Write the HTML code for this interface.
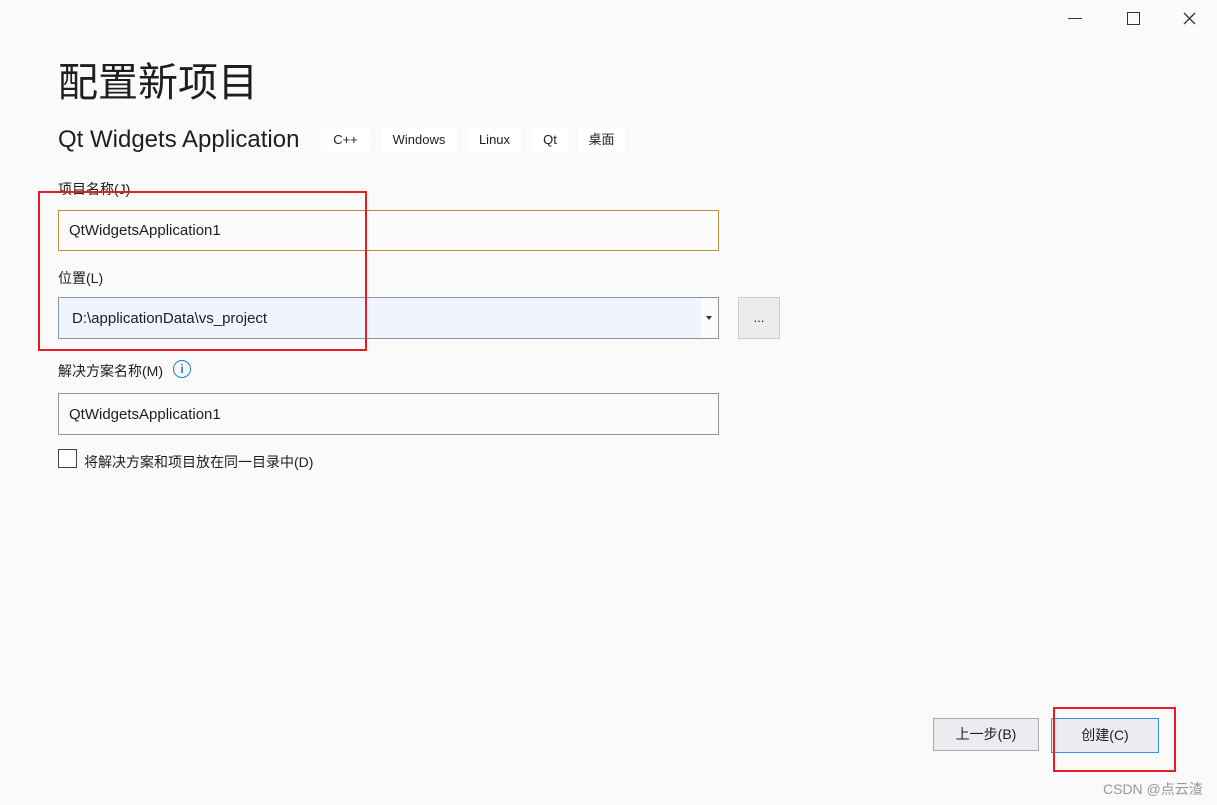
<!DOCTYPE html>
<html><head><meta charset="utf-8"><style>
body{margin:0;width:1217px;height:805px;background:#fafafa;font-family:"Liberation Sans","Noto Sans CJK SC",sans-serif;color:#1e1e1e;position:relative;overflow:hidden}
.a{position:absolute}
.tag{position:absolute;top:127px;height:26px;background:#fff;border-radius:3px;font-size:13px;line-height:26px;text-align:center}
.lbl{position:absolute;font-size:14px;left:58px}
.box{position:absolute;left:58px;width:661px;background:#fbfbfb;font-size:15px;box-sizing:border-box;padding-left:10px}
.red{position:absolute;border:2px solid #e81c24;box-sizing:border-box}
</style></head><body>
<div class="a" style="left:1068px;top:18px;width:14px;border-top:1px solid #333"></div>
<div class="a" style="left:1127px;top:12px;width:11px;height:11px;border:1px solid #333"></div>
<svg class="a" style="left:1183px;top:12px" width="13" height="13"><path d="M1 1L12 12M12 1L1 12" stroke="#333" stroke-width="1.3"/></svg>
<div class="a" style="left:58px;top:50px;font-size:40px;color:#1e1e1e">配置新项目</div>
<div class="a" style="left:58px;top:126px;font-size:24px">Qt Widgets Application</div>
<div class="tag" style="left:321px;width:49px">C++</div>
<div class="tag" style="left:381px;width:76px">Windows</div>
<div class="tag" style="left:468px;width:53px">Linux</div>
<div class="tag" style="left:532px;width:36px">Qt</div>
<div class="tag" style="left:578px;width:47px">桌面</div>
<div class="lbl" style="top:179px">项目名称(J)</div>
<div class="box" style="top:210px;height:41px;border:1px solid #b8913e;line-height:40px">QtWidgetsApplication1</div>
<div class="lbl" style="top:268px">位置(L)</div>
<div class="box" style="top:297px;height:42px;border:1px solid #8b93a8;background:#f0f4fc;line-height:41px;padding-left:13px">D:\applicationData\vs_project</div>
<div class="a" style="left:701px;top:298px;width:17px;height:40px;background:#fbfbfb"></div>
<div class="a" style="left:706px;top:316px;width:0;height:0;border-left:3px solid transparent;border-right:3px solid transparent;border-top:4px solid #333"></div>
<div class="a" style="left:738px;top:297px;width:40px;height:40px;border:1px solid #ccc;background:#ececec;text-align:center;font-size:13px;line-height:40px">...</div>
<div class="lbl" style="top:361px">解决方案名称(M)</div>
<div class="a" style="left:173px;top:360px;width:16px;height:16px;border:1.5px solid #1a7fd4;border-radius:50%;color:#1a7fd4;font-size:12px;text-align:center;line-height:16px;font-weight:bold">i</div>
<div class="box" style="top:393px;height:42px;border:1px solid #8b93a8;line-height:41px">QtWidgetsApplication1</div>
<div class="a" style="left:58px;top:449px;width:17px;height:17px;border:1px solid #444;background:#fff"></div>
<div class="a" style="left:84px;top:452px;font-size:14px">将解决方案和项目放在同一目录中(D)</div>
<div class="a" style="left:933px;top:718px;width:106px;height:33px;border:1px solid #aaa;background:#ececf0;box-sizing:border-box;text-align:center;line-height:31px;font-size:14px">上一步(B)</div>
<div class="a" style="left:1051px;top:718px;width:108px;height:35px;border:1px solid #3a8ee6;background:#ececf0;box-sizing:border-box;text-align:center;line-height:33px;font-size:14px">创建(C)</div>
<div class="red" style="left:38px;top:191px;width:329px;height:160px"></div>
<div class="red" style="left:1053px;top:707px;width:123px;height:65px"></div>
<div class="a" style="left:1103px;top:779px;font-size:14px;color:#999">CSDN @点云渣</div>
</body></html>
